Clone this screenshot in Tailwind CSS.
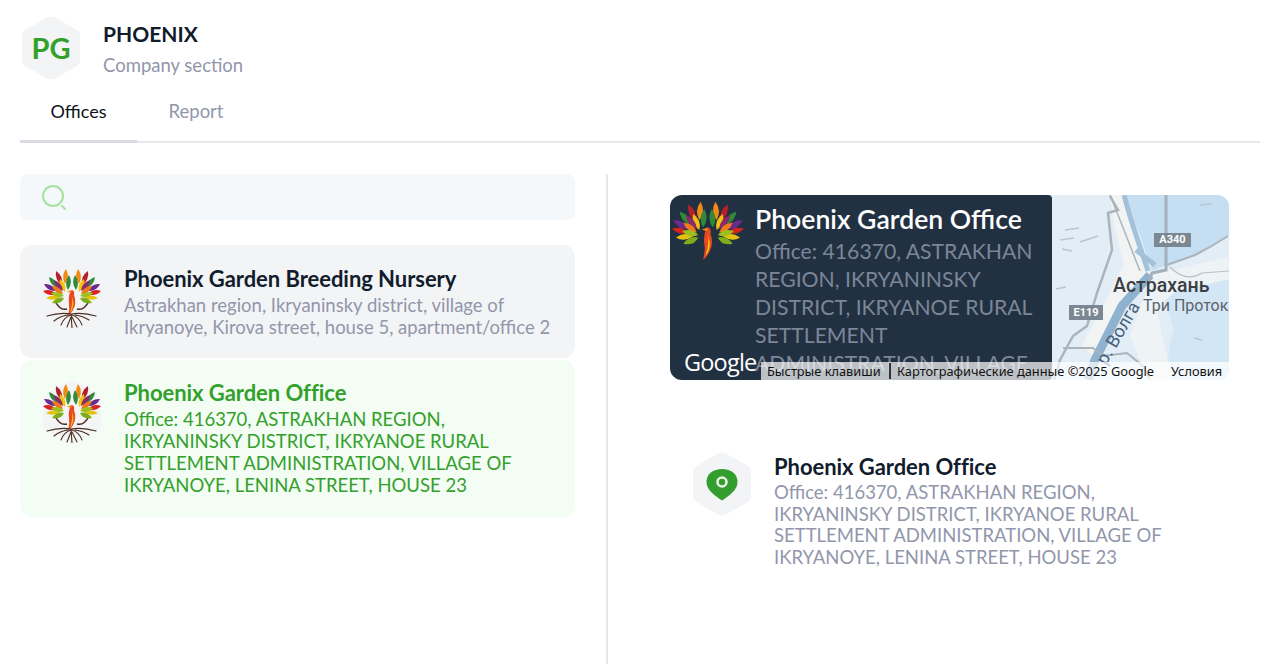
<!DOCTYPE html>
<html lang="en">
<head>
<meta charset="UTF-8">
<title>Phoenix company section</title>
<script src="https://cdn.jsdelivr.net/npm/@tailwindcss/browser@4"></script>
</head>
<body class="bg-white font-['Lato','Noto_Sans',sans-serif] overflow-hidden">
<svg class="hidden" width="0" height="0">
  <defs>
    <symbol id="wing" viewBox="0 0 30 40">
      <path d="M23 18Q28.300 10.800 24 3Q18.700 10.200 23 18Z" fill="#f08a14"/>
      <path d="M20 19Q21.500 10.100 14 5Q12.500 13.900 20 19Z" fill="#b3202a"/>
      <path d="M16 22Q15.200 13.500 7 11Q7.800 19.500 16 22Z" fill="#2f8a3a"/>
      <path d="M14 25Q10.400 17.300 2 18Q5.600 25.700 14 25Z" fill="#6b2a8f"/>
      <path d="M14 28Q8.500 22.200 1 25Q6.500 30.800 14 28Z" fill="#d8231f"/>
      <path d="M18 31Q11.300 27 4 32Q10.700 36 18 31Z" fill="#e6c20f"/>
      <path d="M22 32Q15 30 10 37Q19 39 22 32Z" fill="#7fae1c"/>
      <path d="M26 24Q31.300 16.800 27 9Q21.700 16.200 26 24Z" fill="#2f8a3a"/>
      <path d="M23 26Q25 17.800 18 13Q16 21.200 23 26Z" fill="#f3c312"/>
      <path d="M21 25Q20.200 16.500 12 14Q12.800 22.500 21 25Z" fill="#8a2a6a"/>
      <path d="M21 28Q18.300 20.100 10 20Q12.700 27.900 21 28Z" fill="#ee7a1a"/>
      <path d="M22 30Q16.500 24.100 9 27Q14.500 32.900 22 30Z" fill="#9cc01f"/>
    </symbol>
    <symbol id="bird" viewBox="0 0 60 62">
      <use href="#wing" x="0" y="0" width="30" height="40"/>
      <use href="#wing" x="-60" y="0" width="30" height="40" transform="scale(-1 1)"/>
      <path d="M29 24 Q33 24 32 29 Q35 37 31 44 Q28 49 26 50 Q28 43 27 37 Q26 30 29 24Z" fill="#e8481f"/>
      <path d="M29.500 29 Q31.500 36 28 47 Q31.500 43 31.500 36Z" fill="#f8c118"/>
      <path d="M25 25.500 L30 24 L29 27Z" fill="#f08a14"/>
    </symbol>
    <symbol id="phoenix" viewBox="0 0 60 62">
      <path d="M13 35 Q18 45 25 43 M47 35 Q42 45 35 43" fill="none" stroke="#4a2a1c" stroke-width="1.500"/>
      <use href="#bird" width="60" height="62"/>
      <path d="M5 50 Q18 46 29 48 Q41 46 54 50 M29 48 L30 62 M29 49 Q22 51 19 59 M30 49 Q37 51 40 59 M26 49 Q18 50 12 55 M33 49 Q41 50 47 54 M29 51 L25 61 M30 51 L35 61" fill="none" stroke="#4a2f22" stroke-width="1.100" stroke-linecap="round"/>
    </symbol>
    <symbol id="hex" viewBox="0 0 58 64" preserveAspectRatio="none">
      <path d="M25 1.600 Q29 -.4 33 1.600 L54 13.600 Q58 16 58 20 L58 44 Q58 48 54 50.400 L33 62.400 Q29 64.400 25 62.400 L4 50.400 Q0 48 0 44 L0 20 Q0 16 4 13.600Z" fill="#f3f4f6"/>
    </symbol>
  </defs>
</svg>

<div class="px-5 h-[664px] flex flex-col">
  <!-- header -->
  <div class="flex items-start pt-4 pl-0.5">
    <div class="relative w-[58px] h-[64px] flex items-center justify-center">
      <svg class="absolute inset-0 w-[58px] h-[64px]"><use href="#hex"/></svg>
      <span class="relative text-[29px] font-bold text-[#34a02c] -mt-[1px]">PG</span>
    </div>
    <div class="ml-[23px] pt-1.5">
      <div class="text-[21px] leading-6 font-bold text-[#111c2d]">PHOENIX</div>
      <div class="text-[18.5px] leading-6 mt-[7px] text-[#9296ab]">Company section</div>
    </div>
  </div>

  <!-- tabs -->
  <div class="flex h-[46px] border-b-2 border-[#e6e7ec] mt-[17px]">
    <div class="w-[117px] h-[46px] border-b-[3px] border-[#d9dbe3] flex justify-center text-lg leading-7 text-[#0c1420]">Offices</div>
    <div class="w-[118px] flex justify-center text-[18.5px] leading-7 text-[#9296ab]">Report</div>
  </div>

  <div class="flex flex-1 pt-[31px]">
    <!-- list -->
    <div class="w-[555px] shrink-0">
      <div class="h-[46px] bg-[#f5f8fb] rounded-lg flex items-center pl-[22px]">
        <svg width="24" height="26" viewBox="0 0 24 26" fill="none" stroke="#a8e2a3" stroke-width="2.200" stroke-linecap="round"><circle cx="11" cy="12" r="10"/><path d="M20 22 L23 25"/></svg>
      </div>

      <div class="mt-[25px] h-[113px] bg-[#f3f4f6] rounded-xl flex pl-[22px] pt-5">
        <div class="relative w-[60px] h-[64px] shrink-0">
          <svg class="absolute left-[1px] top-0 w-[58px] h-[64px]"><use href="#hex"/></svg>
          <svg class="absolute left-0 top-[1px] w-[60px] h-[62px]"><use href="#phoenix"/></svg>
        </div>
        <div class="ml-[22px]">
          <div class="text-[22px] leading-7 font-bold tracking-[-0.05px] text-[#111c2d] whitespace-nowrap">Phoenix Garden Breeding Nursery</div>
          <div class="text-[18.5px] leading-[21.7px] mt-[2px] text-[#9296ab] whitespace-nowrap">Astrakhan region, Ikryaninsky district, village of<br>Ikryanoye, Kirova street, house 5, apartment/office 2</div>
        </div>
      </div>

      <div class="mt-[2px] h-[157px] bg-[#f3fdf3] rounded-xl flex pl-[22px] pt-[19px]">
        <div class="relative w-[60px] h-[64px] shrink-0 mt-px">
          <svg class="absolute left-[1px] top-0 w-[58px] h-[64px]"><use href="#hex"/></svg>
          <svg class="absolute left-0 top-[1px] w-[60px] h-[62px]"><use href="#phoenix"/></svg>
        </div>
        <div class="ml-[22px]">
          <div class="text-[22px] leading-7 font-bold tracking-[-0.05px] text-[#34a02c] whitespace-nowrap">Phoenix Garden Office</div>
          <div class="text-[18.5px] leading-[22px] mt-px text-[#34a02c] whitespace-nowrap">Office: 416370, ASTRAKHAN REGION,<br>IKRYANINSKY DISTRICT, IKRYANOE RURAL<br>SETTLEMENT ADMINISTRATION, VILLAGE OF<br>IKRYANOYE, LENINA STREET, HOUSE 23</div>
        </div>
      </div>
    </div>

    <!-- detail -->
    <div class="ml-[31px] border-l-2 border-[#e6e7ec] pl-[62px] pt-[21px] flex-1">
      <div class="relative w-[559px] h-[185px] rounded-xl overflow-hidden bg-[#e2edf6]">
        <!-- map -->
        <svg class="absolute left-[382px] top-0 w-[177px] h-[185px]" viewBox="0 0 177 185" fill="none">
          <path d="M70 0 L177 0 L177 40 L143 60 L115 70 L100 76 L88 40Z" fill="#c5def2"/>
          <path d="M112 100 L177 84 L177 185 L120 185 Q112 160 122 135Z" fill="#d3e6f5"/>
          <path d="M58 0 L72 0 L98 78 L86 92 L70 110 L52 150 L44 165 L30 150 L52 110 L72 70 L62 30Z" fill="#f2f4f4"/>
          <path d="M100 80 L176 62 L177 84 L125 96 L104 112 L120 185 L96 185 L78 140Z" fill="#eef3f5"/>
          <path d="M72 0 Q78 22 84 40 L96 76" stroke="#a3c2da" stroke-width="5"/>
          <path d="M84 55 L103 70" stroke="#a3c2da" stroke-width="5"/>
          <path d="M98 80 L70 111 L43 165 L36 185" stroke="#8fb3cf" stroke-width="9"/>
          <path d="M58 1 L66 15 L56 18 L60 55 L45 98 L35 131 L21 141 L8 165 L2 185" stroke="#aab4bc" stroke-width="2.500"/>
          <path d="M58 0 L70 30 L88 76" stroke="#aab4bc" stroke-width="1.500"/>
          <path d="M114 0 L114 75 L100 78 L96 90" stroke="#a4b0ba" stroke-width="3"/>
          <path d="M115 70 L143 60 L158 52 L176 41" stroke="#aab4bc" stroke-width="2"/>
          <path d="M118 72 Q134 88 150 78 L177 76" stroke="#b8c2ca" stroke-width="1.200"/>
          <path d="M11 153 L41 153 L51 161 L75 158 L91 171 L98 185" stroke="#aab4bc" stroke-width="2"/>
          <path d="M13 35 L27 33 M8 45 L22 43 M28 47 L46 41 M10 54 L20 56 M4 94 L14 92 M142 143 L150 145 M148 10 L160 9" stroke="#b5c7d3" stroke-width="1.500"/>
        </svg>
        <div class="absolute left-[484px] top-[38px] w-[37px] h-[14px] bg-[#7b8894] text-white text-[11px] leading-[14px] font-bold text-center font-['Roboto']">A340</div>
        <div class="absolute left-[399px] top-[110px] w-[34px] h-[15px] bg-[#7b8894] text-white text-[11px] leading-[15px] font-bold text-center font-['Roboto']">E119</div>
        <div class="absolute left-[443px] top-[79px] text-[19.5px] leading-6 font-medium text-[#3a3f45] font-['Roboto']">Астрахань</div>
        <div class="absolute left-[473px] top-[101px] text-[16px] leading-5 text-[#5b636b] font-['Roboto'] whitespace-nowrap">Три Протока</div>
        <div class="absolute left-[408px] top-[128px] w-[80px] h-5 -rotate-[60deg] text-[18px] leading-5 text-center text-[#45617c] font-['Roboto'] whitespace-nowrap">р. Волга</div>

        <!-- info window -->
        <div class="absolute left-0 top-0 w-[382px] h-[185px] bg-[#223142] rounded-r-sm overflow-hidden">
          <svg class="absolute left-[1px] top-[3px] w-[74px] h-[74px]" viewBox="0 0 60 60"><use href="#bird" width="60" height="62"/></svg>
          <div class="absolute left-[85px] top-[6px] text-[26.6px] leading-9 font-semibold text-white whitespace-nowrap">Phoenix Garden Office</div>
          <div class="absolute left-[85px] top-[42px] text-[21.2px] leading-7 text-[#7b8698] whitespace-nowrap">Office: 416370, ASTRAKHAN<br>REGION, IKRYANINSKY<br>DISTRICT, IKRYANOE RURAL<br>SETTLEMENT<br>ADMINISTRATION, VILLAGE</div>
        </div>

        <div class="absolute left-[14px] top-[151px] text-[23.5px] leading-8 font-medium tracking-[-0.8px] text-white font-['Open_Sans']">Google</div>
        <div class="absolute left-[91px] right-0 bottom-0 h-[18px] bg-white/70 flex items-center text-[12.8px] leading-[18px] text-[#111] font-['Noto_Sans'] whitespace-nowrap">
          <span class="ml-[6px] w-[114px]">Быстрые клавиши</span>
          <span class="ml-[8px] w-[2px] h-[16px] bg-[#333]"></span>
          <span class="ml-[6px] w-[258px]">Картографические данные ©2025 Google</span>
          <span class="ml-[16px]">Условия</span>
        </div>
      </div>

      <!-- selected office -->
      <div class="flex mt-[72px] pl-[23px]">
        <div class="relative w-[58px] h-[64px] shrink-0 flex items-center justify-center">
          <svg class="absolute inset-0 w-[58px] h-[64px]"><use href="#hex"/></svg>
          <svg class="relative" width="32" height="33" viewBox="0 0 32 33"><path d="M16 1 C25 1 31.500 6 31.500 14 C31.500 22 23 28 16 32.500 C9 28 .5 22 .5 14 C.5 6 7 1 16 1Z" fill="#339e2e"/><circle cx="16" cy="14" r="4.500" fill="none" stroke="#e8f3e6" stroke-width="2.600"/></svg>
        </div>
        <div class="ml-[23px] mt-px">
          <div class="text-[22px] leading-7 font-bold tracking-[-0.05px] text-[#111c2d] whitespace-nowrap">Phoenix Garden Office</div>
          <div class="text-[18.5px] leading-[21.7px] mt-px text-[#9296ab] whitespace-nowrap">Office: 416370, ASTRAKHAN REGION,<br>IKRYANINSKY DISTRICT, IKRYANOE RURAL<br>SETTLEMENT ADMINISTRATION, VILLAGE OF<br>IKRYANOYE, LENINA STREET, HOUSE 23</div>
        </div>
      </div>
    </div>
  </div>
</div>
</body>
</html>
